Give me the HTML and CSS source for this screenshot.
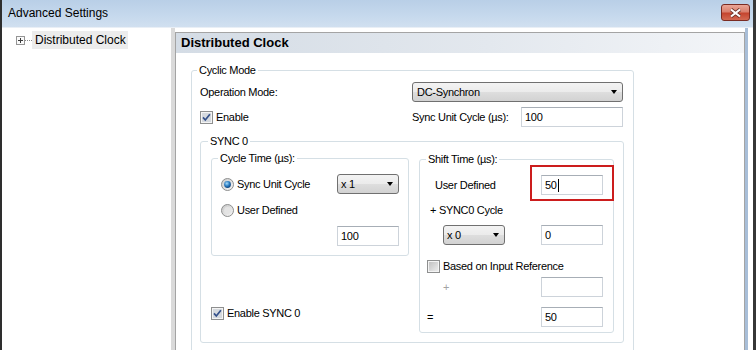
FILE: index.html
```html
<!DOCTYPE html>
<html>
<head lang="en">
    <meta charset="UTF-8">
    <title>Advanced Settings</title>
    <link rel="stylesheet" href="styles.css">
</head>
<body>
<div class="window">
    <div class="titlebar">
        <span class="title">Advanced Settings</span>
        <span class="close">
            <svg width="13" height="10" viewBox="0 0 13 10"><path d="M2 1.5 11 8.5M11 1.5 2 8.5" stroke="#6a3228" stroke-width="3.6" fill="none"/><path d="M2 1.5 11 8.5M11 1.5 2 8.5" stroke="#fff" stroke-width="2.2" fill="none"/></svg>
        </span>
    </div>
    <div class="client">
        <div class="tree">
            <div class="node">
                <svg class="expander" width="9" height="9" viewBox="0 0 9 9"><rect x=".5" y=".5" width="8" height="8" fill="#fafafa" stroke="#959595"/><path d="M2 4.5h5M4.5 2v5" stroke="#3c3c3c"/></svg>
                <span class="dots"></span>
                <span class="label">Distributed Clock</span>
            </div>
        </div>
        <div class="splitter"></div>
        <div class="page">
            <div class="page-head">Distributed Clock</div>

            <div class="group cyclic">
                <span class="cap">Cyclic Mode</span>
                <div class="row">
                    <span class="c1">Operation Mode:</span>
                    <span class="combo wide">DC-Synchron<i class="arrow"></i></span>
                </div>
                <div class="row gap5">
                    <span class="c1 check">
                        <svg width="13" height="13" viewBox="0 0 13 13"><rect x=".5" y=".5" width="12" height="12" fill="#f4f4f4" stroke="#8e8f8f"/><rect x="2" y="2" width="9" height="9" fill="#d5d9de"/><path d="M3 6.4 5.3 9 9.9 3.2" fill="none" stroke="#34508a" stroke-width="1.7"/></svg>
                        Enable
                    </span>
                    <span class="c2">Sync Unit Cycle (µs):</span>
                    <span class="edit w102">100</span>
                </div>

                <div class="group sync0">
                    <span class="cap">SYNC 0</span>
                    <div class="left-col">
                        <div class="group cycle">
                            <span class="cap">Cycle Time (µs):</span>
                            <div class="row">
                                <span class="c1 check">
                                    <svg width="13" height="13" viewBox="0 0 13 13"><defs><linearGradient id="ra" x1="0" y1="0" x2="1" y2="1"><stop offset="0" stop-color="#c9c9c9"/><stop offset="1" stop-color="#f7f7f7"/></linearGradient><radialGradient id="rb" cx=".4" cy=".35" r=".7"><stop offset="0" stop-color="#a6dcfb"/><stop offset=".55" stop-color="#2a7bc0"/><stop offset="1" stop-color="#0d3b72"/></radialGradient></defs><circle cx="6.5" cy="6.5" r="6" fill="url(#ra)" stroke="#8e8f8f"/><circle cx="6.5" cy="6.5" r="3.4" fill="url(#rb)"/></svg>
                                    Sync Unit Cycle
                                </span>
                                <span class="combo w62">x 1<i class="arrow"></i></span>
                            </div>
                            <div class="row gap6">
                                <span class="c1 check">
                                    <svg width="13" height="13" viewBox="0 0 13 13"><defs><linearGradient id="rc" x1="0" y1="0" x2="1" y2="1"><stop offset="0" stop-color="#c4c4c4"/><stop offset="1" stop-color="#f9f9f9"/></linearGradient></defs><circle cx="6.5" cy="6.5" r="6" fill="url(#rc)" stroke="#8e8f8f"/><circle cx="6.5" cy="6.5" r="3.4" fill="#e4e4e4"/></svg>
                                    User Defined
                                </span>
                            </div>
                            <div class="row gap6">
                                <span class="c1"></span>
                                <span class="edit w62">100</span>
                            </div>
                        </div>
                        <div class="row enable-sync">
                            <span class="check">
                                <svg width="13" height="13" viewBox="0 0 13 13"><rect x=".5" y=".5" width="12" height="12" fill="#f4f4f4" stroke="#8e8f8f"/><rect x="2" y="2" width="9" height="9" fill="#d5d9de"/><path d="M3 6.4 5.3 9 9.9 3.2" fill="none" stroke="#34508a" stroke-width="1.7"/></svg>
                                Enable SYNC 0
                            </span>
                        </div>
                    </div>

                    <div class="group shift">
                        <span class="cap">Shift Time (µs):</span>
                        <div class="row">
                            <span class="c1 in8">User Defined</span>
                            <span class="mark"><span class="edit w62">50<span class="caret"></span></span></span>
                        </div>
                        <div class="row h18 gap6">
                            <span class="c1 in3">+ SYNC0 Cycle</span>
                        </div>
                        <div class="row gap6">
                            <span class="c1 in16"><span class="combo w62">x 0<i class="arrow"></i></span></span>
                            <span class="edit w62">0</span>
                        </div>
                        <div class="row gap11">
                            <span class="check">
                                <svg width="13" height="13" viewBox="0 0 13 13"><defs><linearGradient id="cb" x1="0" y1="0" x2="1" y2="1"><stop offset="0" stop-color="#c2c2c2"/><stop offset="1" stop-color="#ececec"/></linearGradient></defs><rect x=".5" y=".5" width="12" height="12" fill="#f4f4f4" stroke="#8e8f8f"/><rect x="2" y="2" width="9" height="9" fill="url(#cb)"/></svg>
                                Based on Input Reference
                            </span>
                        </div>
                        <div class="row gap1">
                            <span class="c1 in16 muted">+</span>
                            <span class="edit w62"></span>
                        </div>
                        <div class="row gap10">
                            <span class="c1">=</span>
                            <span class="edit w62">50</span>
                        </div>
                    </div>
                </div>
            </div>
        </div>
        <div class="edge"></div>
    </div>
</div>
</body>
</html>
```

FILE: styles.css
```css
*{
    margin: 0px;
    padding: 0px;
    box-sizing: border-box;
}
body{
    width: 756px;
    height: 350px;
    overflow: hidden;
    background: #fff;
    color: #000;
    font-family: "Liberation Sans", Arial, sans-serif;
    font-size: 11px;
    letter-spacing: -0.3px;
}
.window{
    height: 350px;
    overflow: hidden;
    border-left: 2px solid #2e2e2e;
    border-right: 3px solid #363636;
}

/* title bar */
.titlebar{
    height: 28px;
    display: flex;
    justify-content: space-between;
    padding: 0px 3px 0px 6px;
    background: linear-gradient(#b9cfe7, #c6d9ed 60%, #d1e0f0);
    border-bottom: 1px solid #e9eff6;
}
.title{
    font-size: 12px;
    letter-spacing: 0px;
    line-height: 27px;
}
.close{
    margin-top: 4px;
    width: 29px;
    height: 17px;
    display: flex;
    align-items: center;
    justify-content: center;
    border: 1px solid #7a2b22;
    border-radius: 3px;
    background: linear-gradient(#eaa697, #d9806e 45%, #c5452f 55%, #d36a52);
}

.client{
    display: flex;
    height: 322px;
    padding-right: 5px;
}

/* tree */
.tree{
    width: 169px;
    padding: 3px 0px 0px 14px;
}
.node{
    display: flex;
    align-items: center;
    height: 18px;
}
.dots{
    width: 7px;
    border-top: 1px dotted #8a8a8a;
}
.label{
    font-size: 12px;
    letter-spacing: 0px;
    line-height: 18px;
    padding: 0px 2px 0px 3px;
    background: #ececec;
}
.splitter{
    width: 4px;
    background: #dadada;
}

/* page */
.page{
    width: 570px;
    margin-top: 4px;
    overflow: hidden;
    border: 1px solid #a4a4a4;
    border-bottom: none;
}
.page-head{
    height: 20px;
    line-height: 20px;
    padding-left: 5px;
    font-size: 13px;
    font-weight: bold;
    letter-spacing: 0px;
    background: linear-gradient(90deg, #d4dce5, #e3e8ee 55%, #f3f5f8);
}
.edge{
    width: 3px;
    background: #a8bed8;
}

/* group boxes */
.group{
    position: relative;
    border: 1px solid #d5dfe5;
    border-radius: 3px;
}
.cap{
    position: absolute;
    top: -7px;
    left: 6px;
    padding: 0px 2px;
    line-height: 13px;
    background: #fff;
}
.cyclic{
    width: 443px;
    height: 290px;
    margin: 17px 0px 0px 15px;
    padding: 11px 8px 0px 8px;
}
.cyclic > .cap{
    left: 5px;
}
.sync0{
    width: 424px;
    margin-top: 14px;
    padding: 16px 9px 9px 10px;
    display: flex;
    align-items: flex-start;
    gap: 10px;
}
.sync0 > .cap{
    left: 7px;
}
.left-col{
    width: 198px;
}
.cycle{
    padding: 15px 9px 9px 9px;
}
.shift{
    width: 195px;
    margin-top: 1px;
    padding: 15px 10px 5px 7px;
}

/* rows */
.row{
    display: flex;
    align-items: center;
    height: 20px;
}
.h18{ height: 18px; }
.gap1{ margin-top: 1px; }
.gap5{ margin-top: 5px; }
.gap6{ margin-top: 6px; }
.gap10{ margin-top: 10px; }
.gap11{ margin-top: 11px; }
.enable-sync{
    margin-top: 47px;
}
.cyclic .c1{ width: 212px; }
.cyclic .c2{ width: 109px; }
.cycle .c1{ width: 116px; }
.shift .c1{ width: 114px; }
.in3{ padding-left: 3px; }
.in8{ padding-left: 8px; }
.in16{ padding-left: 16px; }
.muted{ color: #a3a3a3; }

.check{
    display: flex;
    align-items: center;
    gap: 3px;
}

/* controls */
.combo{
    height: 20px;
    display: flex;
    align-items: center;
    justify-content: space-between;
    padding: 0px 5px 0px 3px;
    border: 1px solid #707070;
    border-radius: 3px;
    background: linear-gradient(#f3f3f3, #ebebeb 50%, #dedede 50%, #d2d2d2);
}
.wide{
    width: 211px;
    padding-left: 4px;
}
.arrow{
    width: 0px;
    height: 0px;
    border-left: 3.5px solid transparent;
    border-right: 3.5px solid transparent;
    border-top: 4px solid #000;
}
.edit{
    height: 20px;
    display: flex;
    align-items: center;
    padding-left: 3px;
    background: #fff;
    border: 1px solid #cdd3da;
    border-top-color: #a7aeb6;
}
.w62{ width: 62px; }
.w102{ width: 102px; }
.mark{
    position: relative;
}
.mark::after{
    content: "";
    position: absolute;
    left: -11px;
    top: -10px;
    right: -11px;
    bottom: -6px;
    border: 2px solid #cc1d1d;
}
.caret{
    width: 1px;
    height: 13px;
    margin-left: 1px;
    background: #000;
}
```
